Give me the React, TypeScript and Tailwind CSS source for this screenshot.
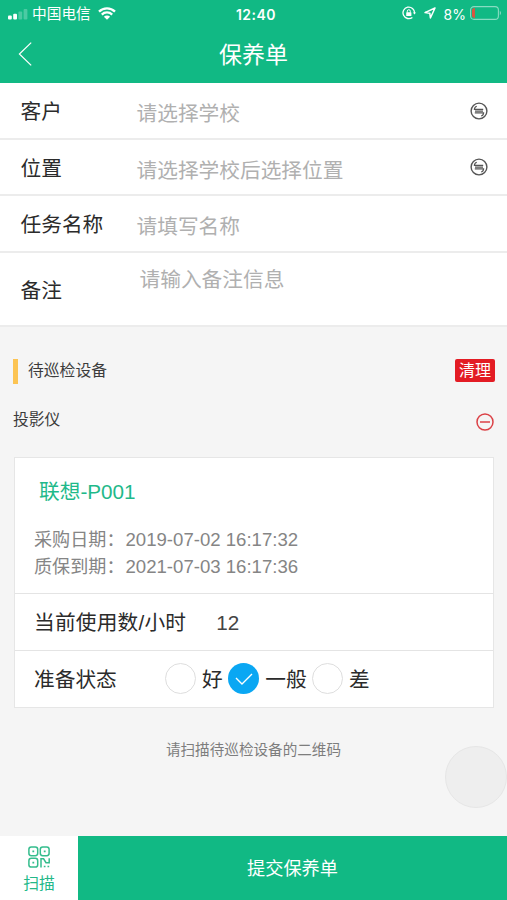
import type { ReactNode } from 'react';

interface FieldProps {
  label: string;
  placeholder: string;
  className: string;
  placeholderClass?: string;
  selectable?: boolean;
}

const STATUS_OPTIONS = [
  { value: 'GOOD', label: '好' },
  { value: 'NORMAL', label: '一般' },
  { value: 'BAD', label: '差' },
];

const DEVICE = {
  name: '联想-P001',
  purchased: '2019-07-02 16:17:32',
  warranty: '2021-07-03 16:17:36',
  hours: '12',
  status: 'NORMAL',
};

function SwapIcon() {
  return (
    <svg className="h-[18px] w-[18px]" viewBox="0 0 18 18" fill="none" stroke="#555" strokeWidth="1.2">
      <circle cx="9" cy="9" r="7.9" strokeWidth="1.4" />
      <path d="M13.2 7.4H4.4C4.4 5.8 5.2 4.7 6.8 4.2M5 9.1h8M4.8 10.8h8.8c0 1.6-.8 2.7-2.4 3.2" />
    </svg>
  );
}

function ScanIcon() {
  return (
    <svg className="h-[22px] w-[22px]" viewBox="0 0 22 22" fill="none" stroke="#35bd8d" strokeWidth="1.5">
      <rect x="0.9" y="0.9" width="8.8" height="8.8" rx="2.4" />
      <rect x="12.3" y="0.9" width="8.8" height="8.8" rx="2.4" />
      <rect x="0.9" y="12.3" width="8.8" height="8.8" rx="2.4" />
      <path d="M4.4 5.3h1.8M15.8 5.3h1.8M4.4 16.7h1.8" strokeWidth="1.8" />
      <path d="M13 21.5v-8.7h2.6l2.4 3.9h3.2v-4.4M15.8 20.6h1.7M19.5 20.6h1.7" />
    </svg>
  );
}

function StatusBar() {
  return (
    <div className="flex h-7 items-center text-white">
      <div className="flex flex-1 items-center pl-2">
        <svg className="h-[11px] w-5" viewBox="0 0 20 11" fill="#fff">
          <rect x="0" y="6.6" width="3.8" height="4" rx="1" />
          <rect x="5.2" y="4.8" width="3.8" height="5.8" rx="1" />
          <rect x="10.4" y="2.6" width="3.8" height="8" rx="1" opacity="0.25" />
          <rect x="15.6" y="0" width="3.8" height="10.6" rx="1" opacity="0.25" />
        </svg>
        <span className="ml-1 text-[14.7px] leading-7">中国电信</span>
        <svg className="mb-[2px] ml-[7px] h-[13px] w-[18px]" viewBox="0 0 18 13" fill="none" stroke="#fff" strokeWidth="2.3">
          <path d="M1 4.6a11.4 11.4 0 0 1 16 0M3.8 7.6a7.4 7.4 0 0 1 10.4 0" />
          <path d="M9 12.8 5.9 9.7a4.4 4.4 0 0 1 6.2 0z" fill="#fff" stroke="none" />
        </svg>
      </div>
      <span className="ml-[2px] font-['Inter'] text-[14px] font-semibold tracking-[0.5px]">12:40</span>
      <div className="flex flex-1 items-center justify-end pr-[5px]">
        <svg className="mb-[2px] h-[14px] w-[14px]" viewBox="0 0 14 14" fill="none" stroke="#fff" strokeWidth="1.3">
          <path d="M12.6 7A5.8 5.8 0 1 0 10.4 11.4" />
          <path d="m10.8 6.6 1.8 2 1.3-2z" fill="#fff" stroke="none" />
          <rect x="4.2" y="6.2" width="5.2" height="3.9" rx="0.6" fill="#fff" stroke="none" />
          <path d="M5.3 6.6V5.2a1.5 1.5 0 0 1 3 0v1.4" strokeWidth="1" />
        </svg>
        <svg className="mb-[2px] ml-2 h-3 w-3" viewBox="0 0 12 12" fill="none" stroke="#fff" strokeWidth="1.5" strokeLinejoin="round">
          <path d="M11 1 1 5.6l4.8.6.6 4.8z" />
        </svg>
        <span className="ml-2 font-['Inter'] text-[14px]">8%</span>
        <svg className="mb-[2px] ml-1 h-[14px] w-8" viewBox="0 0 32 14" fill="none">
          <rect x="0.6" y="0.6" width="27.8" height="12.8" rx="3.4" stroke="#fff" strokeOpacity="0.5" strokeWidth="1.1" />
          <path d="M4.9 2v10C3 12 2 11 2 9.5V4.5C2 3 3 2 4.9 2z" fill="#e0523f" />
          <path d="M29.8 4.8c1.6.8 1.6 3.6 0 4.4z" fill="#fff" fillOpacity="0.5" />
        </svg>
      </div>
    </div>
  );
}

function Field({ label, placeholder, className, placeholderClass = 'pt-[19px]', selectable }: FieldProps) {
  return (
    <div className={`flex border-b-2 border-[#ececec] pl-[20.5px] pr-[19px] ${className}`}>
      <span className="w-[116px] self-center pt-[3px] text-[20.7px] leading-6 text-[#2b2b2b]">{label}</span>
      <span className={`flex-1 text-[20.7px] leading-6 text-[#b0b0b0] ${placeholderClass}`}>{placeholder}</span>
      {selectable && (
        <button className="self-center">
          <SwapIcon />
        </button>
      )}
    </div>
  );
}

function CardRow({ className, children }: { className: string; children: ReactNode }) {
  return <div className={`flex items-center pl-[19px] text-[20.7px] text-[#2b2b2b] ${className}`}>{children}</div>;
}

export default function App() {
  return (
    <div className="relative flex h-[900px] w-[507px] flex-col overflow-hidden bg-[#f5f5f5] font-['Liberation_Sans','Noto_Sans_CJK_SC',sans-serif]">
      <header className="h-[83px] bg-[#11b984]">
        <StatusBar />
        <div className="flex h-[52px] items-center">
          <svg className="ml-[18px] h-6 w-[14px]" viewBox="0 0 14 24" fill="none" stroke="#fff" strokeWidth="1.2">
            <path d="M13.2.6 1.4 12l11.8 11.4" />
          </svg>
          <h1 className="mr-8 flex-1 pt-px text-center text-[23px] leading-8 text-white">保养单</h1>
        </div>
      </header>

      <section className="bg-white">
        <Field label="客户" placeholder="请选择学校" className="h-[57px]" selectable />
        <Field label="位置" placeholder="请选择学校后选择位置" className="h-14" selectable />
        <Field label="任务名称" placeholder="请填写名称" className="h-[57px]" />
        <Field label="备注" placeholder="请输入备注信息" className="h-[74px]" placeholderClass="pl-[3px] pt-[15px]" />
      </section>

      <main className="flex-1 px-[13px] pt-8">
        <div className="flex h-[25px] items-center">
          <span className="h-[25px] w-[5px] bg-[#fcc453]" />
          <h2 className="mb-[2px] ml-[10px] flex-1 text-[15.8px] leading-6 text-[#3c3c3c]">待巡检设备</h2>
          <button className="-mr-px mb-[2px] h-[23px] w-10 rounded-[2px] bg-[#e31c24] text-[16px] leading-[23px] text-white">清理</button>
        </div>

        <div className="mt-[23px] flex h-[25px] items-center">
          <h3 className="flex-1 text-[15.8px] leading-6 text-[#3c3c3c]">投影仪</h3>
          <svg className="mt-1 h-[18px] w-[18px]" viewBox="0 0 18 18" fill="none" stroke="#db4146" strokeWidth="1.5">
            <circle cx="9" cy="9" r="8" />
            <path d="M4 9h10" />
          </svg>
        </div>

        <div className="ml-px mt-[25px] h-[251px] w-[480px] border border-[#e6e6e6] bg-white">
          <div className="h-[136px] border-b border-[#e4e4e4] pl-[19px] pt-5">
            <h4 className="pl-[5px] text-[20.7px] leading-7 text-[#1fb98a]">{DEVICE.name}</h4>
            <div className="mt-5 text-[18.1px] leading-[27px] text-[#858585]">
              <p className="h-[27px]">
                采购日期：<span className="ml-px text-[18.6px]">{DEVICE.purchased}</span>
              </p>
              <p className="h-[27px]">
                质保到期：<span className="ml-px text-[18.6px]">{DEVICE.warranty}</span>
              </p>
            </div>
          </div>
          <CardRow className="h-[57px] border-b border-[#e4e4e4] pt-[2px]">
            <span className="tracking-[0.2px]">当前使用数/小时</span>
            <span className="ml-[30px] text-[#444]">{DEVICE.hours}</span>
          </CardRow>
          <CardRow className="h-14">
            <span className="w-[131px] pt-[2px]">准备状态</span>
            {STATUS_OPTIONS.map((o) => (
              <label key={o.value} className="mr-[5.5px] flex items-center">
                {o.value === DEVICE.status ? (
                  <span className="flex h-[31px] w-[31px] items-center justify-center rounded-full bg-[#0aa7f3]">
                    <svg className="h-3 w-[18px]" viewBox="0 0 18 12" fill="none" stroke="#fff" strokeWidth="1.4">
                      <path d="m1 5 6 6L17 1" />
                    </svg>
                  </span>
                ) : (
                  <span className="h-[31px] w-[31px] rounded-full border border-[#dedede] bg-white" />
                )}
                <span className="ml-[6px] pt-[2px]">{o.label}</span>
              </label>
            ))}
          </CardRow>
        </div>

        <p className="mt-[30px] text-center text-[14.6px] leading-6 text-[#7d7d7d]">请扫描待巡检设备的二维码</p>
      </main>

      <div className="absolute left-[445px] top-[746px] h-[62px] w-[62px] rounded-full border border-[#e6e6e6] bg-[#eeeeee]" />

      <footer className="flex h-16">
        <button className="flex w-[78px] flex-col items-center bg-white pt-[10px] text-[15.8px] leading-6 text-[#23b888]">
          <ScanIcon />
          <span className="mt-1">扫描</span>
        </button>
        <button className="flex-1 bg-[#11b984] pt-[3px] text-[18.2px] text-white">提交保养单</button>
      </footer>
    </div>
  );
}
